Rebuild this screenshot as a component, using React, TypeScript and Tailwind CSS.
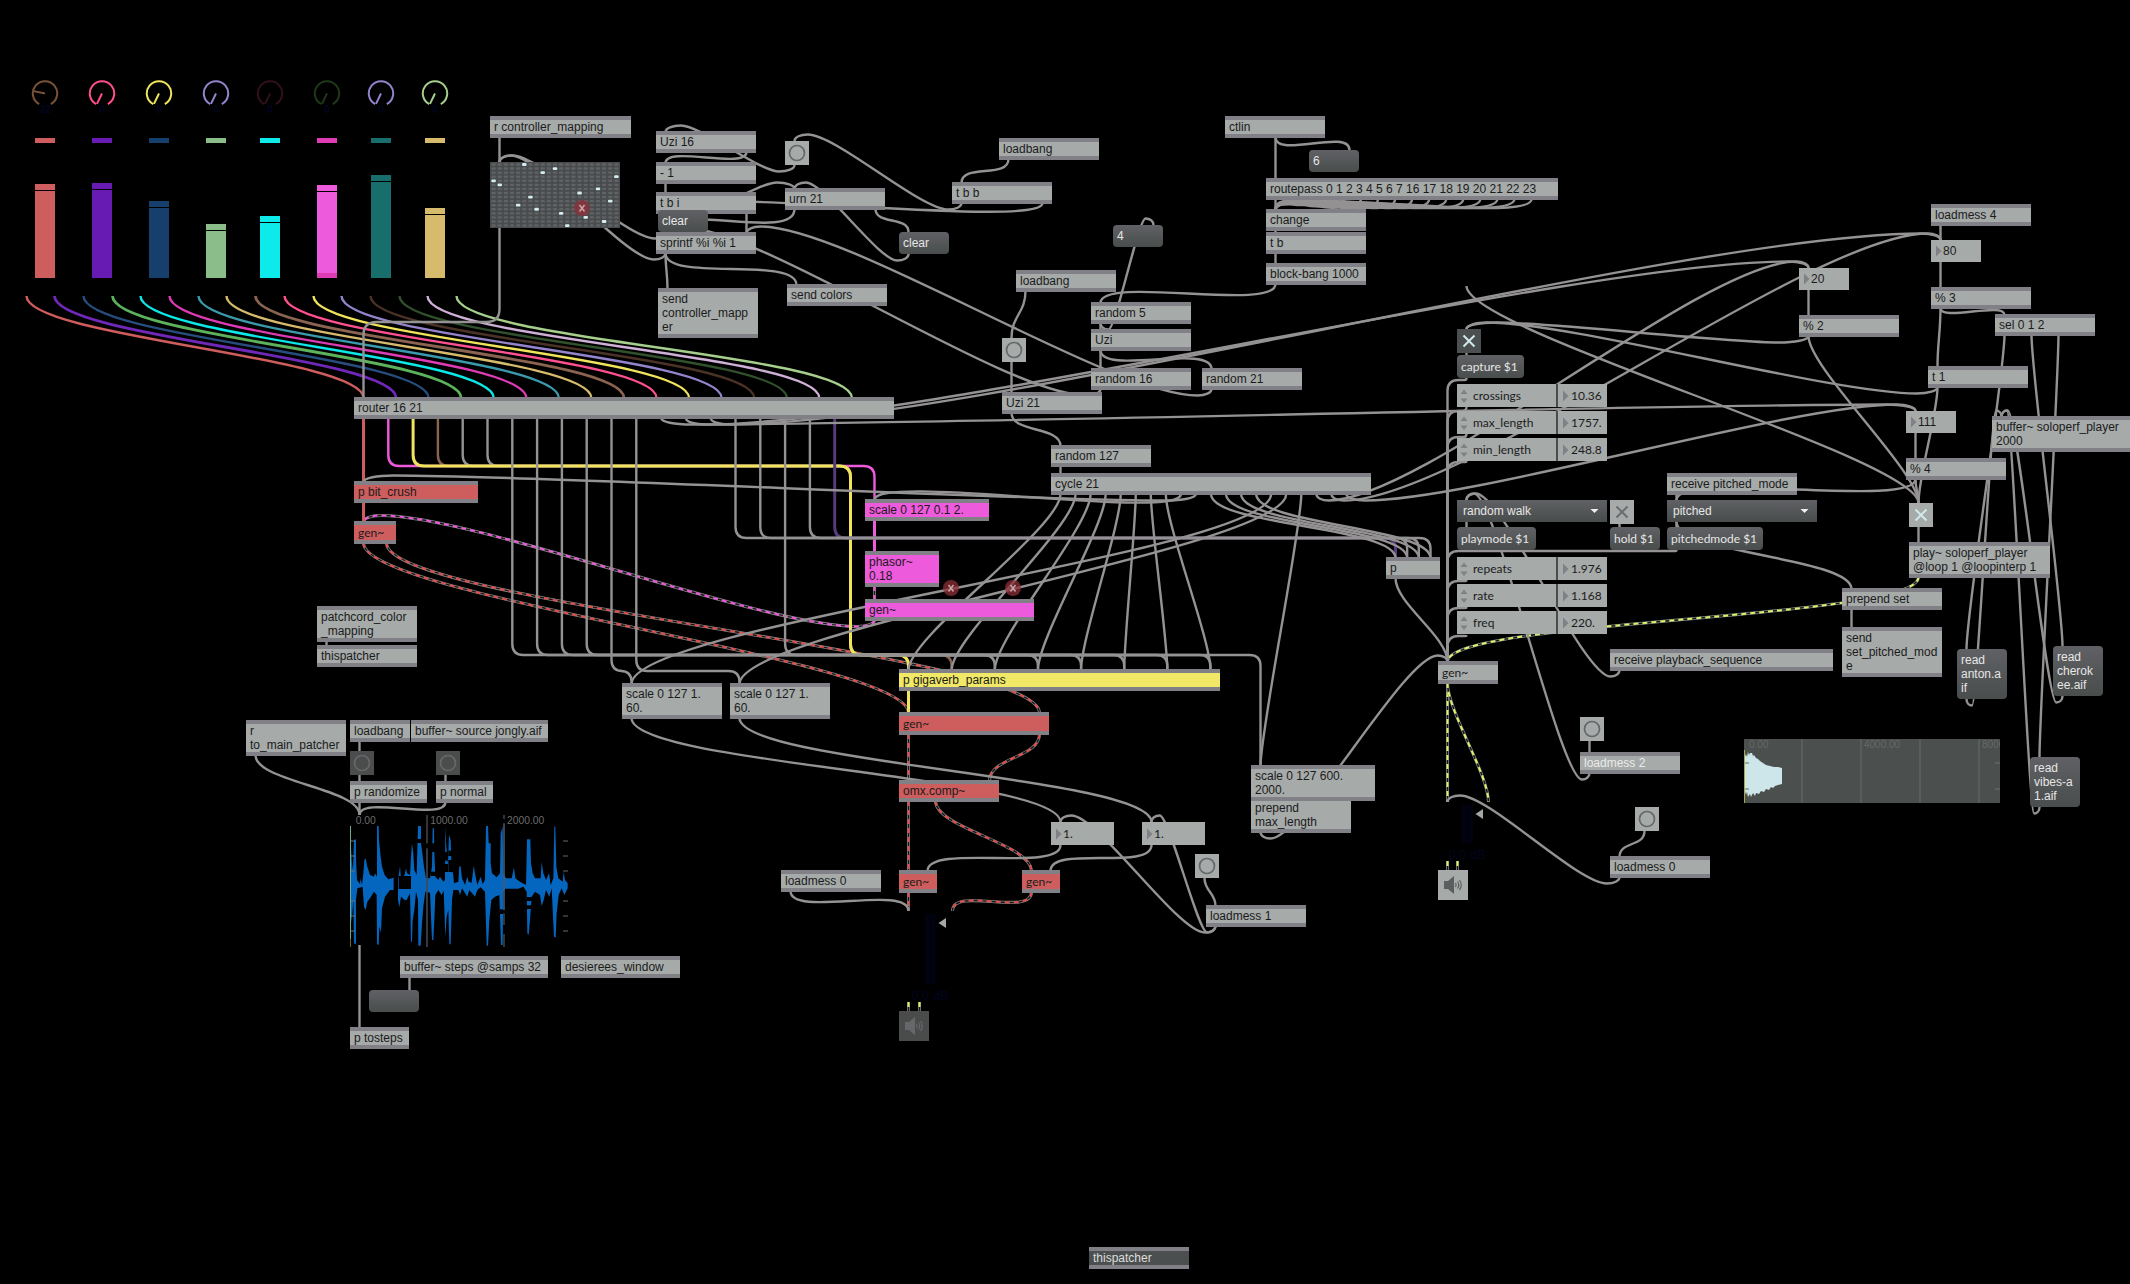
import { Fragment } from "react";

type Tone = "gray" | "red" | "pink" | "yellow" | "dark" | "ghost";

const TONES: Record<Tone, string> = {
  gray: "bg-[#a6aaa9] text-[#1b1b1b]",
  red: "bg-[#ce5d5e] text-[#1b1b1b]",
  pink: "bg-[#ed5adc] text-[#1b1b1b]",
  yellow: "bg-[#f0e866] text-[#1b1b1b]",
  dark: "bg-[#4c4f4f] text-[#dcdedd]",
  ghost: "bg-[#a6aaa9] text-[#ececec]",
};

type Box = {
  x: number;
  y: number;
  w?: number;
  t: string;
  i?: string;
  o?: string;
  tone?: Tone;
  lato?: boolean;
};

// Port strings: "c" is a patched port, "b" a patched cold inlet, "o" a free port.
const BOXES: Box[] = [
  { x: 490, y: 116, w: 141, t: "r controller_mapping", o: "c" },
  { x: 656, y: 131, t: "Uzi 16", i: "co", o: "ooc" },
  { x: 656, y: 162, t: "- 1", i: "co", o: "c" },
  { x: 656, y: 192, t: "t b i", i: "c", o: "cc" },
  { x: 656, y: 232, t: "sprintf %i %i 1", i: "cb", o: "c" },
  { x: 658, y: 288, t: "send\ncontroller_mapp\ner", i: "c" },
  { x: 785, y: 188, t: "urn 21", i: "co", o: "cc" },
  { x: 787, y: 284, t: "send colors", i: "c" },
  { x: 354, y: 397, w: 540, t: "router 16 21", i: "cccccccccccccccco", o: "ccccccccccccccccccccoo" },
  { x: 354, y: 481, w: 124, t: "p bit_crush", i: "c", o: "c", tone: "red" },
  { x: 354, y: 521, w: 42, t: "gen~", i: "c", o: "cc", tone: "red", lato: true },
  { x: 865, y: 499, w: 124, t: "scale 0 127 0.1 2.", i: "cooooo", o: "c", tone: "pink" },
  { x: 865, y: 551, w: 74, t: "phasor~\n0.18", i: "co", o: "c", tone: "pink" },
  { x: 865, y: 599, w: 169, t: "gen~", i: "c", o: "cooo", tone: "pink" },
  { x: 317, y: 606, t: "patchcord_color\n_mapping", o: "c" },
  { x: 317, y: 645, t: "thispatcher", i: "c", o: "oo" },
  { x: 246, y: 720, t: "r\nto_main_patcher", o: "c" },
  { x: 350, y: 720, w: 60, t: "loadbang", i: "o", o: "c" },
  { x: 411, y: 720, w: 137, t: "buffer~ source jongly.aif", i: "o", o: "oo" },
  { x: 350, y: 781, w: 77, t: "p randomize", i: "c", o: "c" },
  { x: 436, y: 781, w: 57, t: "p normal", i: "c", o: "c" },
  { x: 400, y: 956, w: 148, t: "buffer~ steps @samps 32", i: "o", o: "co" },
  { x: 561, y: 956, w: 119, t: "desierees_window" },
  { x: 350, y: 1027, w: 59, t: "p tosteps", i: "c" },
  { x: 622, y: 683, t: "scale 0 127 1.\n60.", i: "cooooo", o: "c" },
  { x: 730, y: 683, t: "scale 0 127 1.\n60.", i: "cooooo", o: "c" },
  { x: 999, y: 138, t: "loadbang", i: "o", o: "c" },
  { x: 952, y: 182, t: "t b b", i: "c", o: "cc" },
  { x: 1225, y: 116, t: "ctlin", i: "o", o: "oco" },
  { x: 1016, y: 270, t: "loadbang", i: "o", o: "c" },
  { x: 1091, y: 302, t: "random 5", i: "co", o: "c" },
  { x: 1091, y: 329, t: "Uzi", i: "co", o: "coo" },
  { x: 1091, y: 368, t: "random 16", i: "co", o: "c" },
  { x: 1202, y: 368, t: "random 21", i: "co", o: "c" },
  { x: 1002, y: 392, t: "Uzi 21", i: "co", o: "coo" },
  { x: 1051, y: 445, t: "random 127", i: "co", o: "c" },
  { x: 1051, y: 473, w: 320, t: "cycle 21", i: "c", o: "cccccccccccccccccccco" },
  { x: 1266, y: 178, w: 292, t: "routepass 0 1 2 3 4 5 6 7 16 17 18 19 20 21 22 23", i: "coooooooooooooooo", o: "cccccccccccccccco" },
  { x: 1266, y: 209, t: "change", i: "c", o: "coo" },
  { x: 1266, y: 232, t: "t b", i: "c", o: "c" },
  { x: 1266, y: 263, t: "block-bang 1000", i: "co", o: "co" },
  { x: 1667, y: 473, w: 130, t: "receive pitched_mode", o: "c" },
  { x: 1610, y: 649, w: 223, t: "receive playback_sequence", o: "c" },
  { x: 1438, y: 661, w: 60, t: "gen~", i: "c", o: "coooooo", lato: true },
  { x: 1931, y: 204, t: "loadmess 4", i: "o", o: "c" },
  { x: 1931, y: 287, t: "% 3", i: "co", o: "c" },
  { x: 1995, y: 314, t: "sel 0 1 2", i: "cooo", o: "ccco" },
  { x: 1799, y: 315, t: "% 2", i: "co", o: "c" },
  { x: 1928, y: 366, t: "t 1", i: "c", o: "c" },
  { x: 1906, y: 458, t: "% 4", i: "co", o: "c" },
  { x: 1992, y: 416, w: 138, t: "buffer~ soloperf_player\n2000", i: "c", o: "oo" },
  { x: 1909, y: 542, w: 141, t: "play~ soloperf_player\n@loop 1 @loopinterp 1", i: "c", o: "co" },
  { x: 1842, y: 588, t: "prepend set", i: "c", o: "c" },
  { x: 1842, y: 627, t: "send\nset_pitched_mod\ne", i: "c" },
  { x: 1386, y: 557, w: 54, t: "p", i: "cccc", o: "c" },
  { x: 899, y: 669, w: 321, t: "p gigaverb_params", i: "cccccccc", o: "c", tone: "yellow" },
  { x: 899, y: 712, w: 150, t: "gen~", i: "cc", o: "cc", tone: "red", lato: true },
  { x: 899, y: 780, t: "omx.comp~", i: "cc", o: "ccoo", tone: "red" },
  { x: 899, y: 870, w: 38, t: "gen~", i: "cc", o: "c", tone: "red", lato: true },
  { x: 1022, y: 870, w: 38, t: "gen~", i: "cc", o: "c", tone: "red", lato: true },
  { x: 781, y: 870, t: "loadmess 0", i: "o", o: "c" },
  { x: 1206, y: 905, t: "loadmess 1", i: "c", o: "c" },
  { x: 1251, y: 797, t: "prepend\nmax_length", o: "c" },
  { x: 1251, y: 765, w: 124, t: "scale 0 127 600.\n2000.", i: "cooooo", o: "c" },
  { x: 1580, y: 752, t: "loadmess 2", i: "c", o: "c", tone: "ghost" },
  { x: 1610, y: 856, t: "loadmess 0", i: "c", o: "c" },
  { x: 1089, y: 1247, t: "thispatcher", i: "o", o: "oo", tone: "dark" },
];

type Message = { x: number; y: number; w: number; t: string; lato?: boolean };

const MESSAGES: Message[] = [
  { x: 658, y: 210, w: 50, t: "clear" },
  { x: 899, y: 232, w: 50, t: "clear" },
  { x: 1113, y: 225, w: 50, t: "4" },
  { x: 1309, y: 150, w: 50, t: "6" },
  { x: 369, y: 990, w: 50, t: " " },
  { x: 1457, y: 355, w: 67, t: "capture $1", lato: true },
  { x: 1457, y: 527, w: 79, t: "playmode $1", lato: true },
  { x: 1610, y: 527, w: 50, t: "hold $1", lato: true },
  { x: 1667, y: 527, w: 96, t: "pitchedmode $1", lato: true },
  { x: 1957, y: 649, w: 50, t: "read\nanton.a\nif" },
  { x: 2053, y: 646, w: 50, t: "read\ncherok\nee.aif" },
  { x: 2030, y: 757, w: 50, t: "read\nvibes-a\n1.aif" },
];

const BANGS = [
  { x: 785, y: 141 },
  { x: 1002, y: 338 },
  { x: 1195, y: 854 },
  { x: 1580, y: 717 },
  { x: 1635, y: 807 },
  { x: 350, y: 751, dark: true },
  { x: 436, y: 751, dark: true },
];

const TOGGLES = [
  { x: 1457, y: 329, box: "bg-[#4c4f4f]", mark: "text-[#cfe8ec]", on: true, name: "capture" },
  { x: 1610, y: 500, box: "bg-[#a6aaa9]", mark: "text-[#6b6c70]", on: false, name: "hold" },
  { x: 1909, y: 503, box: "bg-[#a6aaa9]", mark: "text-[#cfe8ec]", on: true, name: "play" },
];

const NUMBERS = [
  { x: 1799, y: 268, w: 50, t: "20" },
  { x: 1931, y: 240, w: 50, t: "80" },
  { x: 1906, y: 411, w: 50, t: "111" },
  { x: 1051, y: 822, w: 63, t: "1.", lato: true },
  { x: 1142, y: 822, w: 63, t: "1.", lato: true },
];

const LENGTH_ATTRS = [
  { k: "crossings", v: "10.36" },
  { k: "max_length", v: "1757." },
  { k: "min_length", v: "248.8" },
];

const PLAY_ATTRS = [
  { k: "repeats", v: "1.976" },
  { k: "rate", v: "1.168" },
  { k: "freq", v: "220." },
];

const CHANNELS = [
  { gap: "mr-[37px]", dial: "#7a5238", bar: "#ce5d5e", led: "#ce5d5e", top: 184, n: 32 },
  { gap: "mr-[37px]", dial: "#ff4f8d", bar: "#671bb2", led: "#671bb2", top: 183, n: 0 },
  { gap: "mr-[37px]", dial: "#f0e45c", bar: "#163f6c", led: "#163f6c", top: 201, n: 0 },
  { gap: "mr-[34px]", dial: "#9484cc", bar: "#8abd8a", led: "#8abd8a", top: 224, n: 0 },
  { gap: "mr-[37px]", dial: "#32101a", bar: "#0ceaea", led: "#0ceaea", top: 216, n: 0 },
  { gap: "mr-[34px]", dial: "#20381a", bar: "#ed5adc", led: "#de3bb5", top: 185, n: 0 },
  { gap: "mr-[34px]", dial: "#9484cc", bar: "#186e6a", led: "#186e6a", top: 175, n: 0 },
  { gap: "", dial: "#a6cf8c", bar: "#d6bb6c", led: "#d6bb6c", top: 208, n: 0 },
];

const GRAY = "#949292";

// Cords that run down are one S-curve; cords that run up get a small round
// hook at both ends, joined by a nearly straight diagonal.
function curve(x0: number, y0: number, x1: number, y1: number, bend?: number) {
  const dx = x1 - x0;
  const dy = y1 - y0;
  if (dy <= 0) {
    const s = Math.sign(dx) || 1;
    const hx = Math.min(3.5 + 6 * Math.sqrt(Math.abs(dx) / Math.max(-dy, 1)), 30, Math.abs(dx) * 0.35);
    const hy = 6.5;
    const bx = x0 + s * hx;
    const tx = x1 - s * hx;
    const h = 0.2 * (tx - bx);
    return (
      `M${x0} ${y0}C${x0} ${y0 + hy * 0.6} ${x0 + s * hx * 0.45} ${y0 + hy} ${bx} ${y0 + hy}` +
      `C${bx + h} ${y0 + hy} ${tx - h} ${y1 - hy} ${tx} ${y1 - hy}` +
      `C${x1 - s * hx * 0.45} ${y1 - hy} ${x1} ${y1 - hy * 0.6} ${x1} ${y1}`
    );
  }
  const dist = Math.hypot(dx, dy);
  let d = Math.min(20 + 0.06 * dist, 26 + 0.2 * dy);
  if (dist < 50) d = Math.min(d, dist * 0.45);
  if (bend !== undefined) d = bend;
  return `M${x0} ${y0}C${x0} ${y0 + d} ${x1} ${y1 - d} ${x1} ${y1}`;
}

// Right-angled cord with rounded corners through the given points.
function route(points: number[][], r = 11) {
  let path = `M${points[0][0]} ${points[0][1]}`;
  for (let k = 1; k < points.length - 1; k++) {
    const [ax, ay] = points[k - 1];
    const [bx, by] = points[k];
    const [cx, cy] = points[k + 1];
    const inLen = Math.hypot(bx - ax, by - ay);
    const outLen = Math.hypot(cx - bx, cy - by);
    const q = Math.min(r, inLen, outLen);
    path += `L${bx - ((bx - ax) / inLen) * q} ${by - ((by - ay) / inLen) * q}`;
    path += `Q${bx} ${by} ${bx + ((cx - bx) / outLen) * q} ${by + ((cy - by) / outLen) * q}`;
  }
  const end = points[points.length - 1];
  return path + `L${end[0]} ${end[1]}`;
}

const rOut = (k: number) => 363.5 + 24.8 * k;
const rIn = (k: number) => 363.5 + 32.56 * k;
const cOut = (k: number) => 1060.5 + 15.05 * k;
const gIn = (k: number) => 908.5 + 43.14 * k;
const pIn = (k: number) => 1395.5 + 11.67 * k;

const CURVES: number[][] = [
  [499.5, 137, 499.5, 163],
  [665.5, 253, 499.5, 162],
  [667.5, 232, 499.5, 162],
  [794.5, 165, 665.5, 132],
  [746.5, 152, 665.5, 163, 18],
  [665.5, 183, 665.5, 193],
  [746.5, 213, 746.5, 233],
  [665.5, 213, 794.5, 189],
  [961.5, 203, 794.5, 141],
  [1042.5, 203, 667.5, 210],
  [908.5, 254, 794.5, 189],
  [794.5, 209, 665.5, 233, 34],
  [875.5, 209, 908.5, 232, 16],
  [1100.5, 389, 665.5, 233],
  [1211.5, 389, 746.5, 233],
  [665.5, 253, 667.5, 289],
  [665.5, 253, 796.5, 285, 30],
  [1008.5, 159, 961.5, 183, 20],
  [1025.5, 291, 1011.5, 338],
  [1011.5, 362, 1011.5, 393],
  [1100.5, 323, 1153.5, 225],
  [1275.5, 284, 1100.5, 303, 28],
  [1100.5, 323, 1100.5, 330],
  [1100.5, 350, 1100.5, 369],
  [1100.5, 350, 1211.5, 369, 26],
  [1011.5, 413, 1060.5, 446, 20],
  [1060.5, 466, 1060.5, 474],
  [1275.5, 137, 1275.5, 179],
  [1275.5, 137, 1349.5, 150, 22],
  [1275.5, 230, 1275.5, 233],
  [1275.5, 253, 1275.5, 264],
  [1466.5, 286, 1918.5, 503, 45],
  [1808.5, 336, 1466.5, 329],
  [1937.5, 387, 1466.5, 329],
  [1808.5, 336, 1918.5, 503],
  [1937.5, 387, 1918.5, 503],
  [1915.5, 479, 1918.5, 503],
  [1915.5, 479, 1676.5, 500],
  [1918.5, 527, 1918.5, 543],
  [1676.5, 494, 1676.5, 500],
  [1676.5, 522, 1676.5, 527],
  [1466.5, 522, 1466.5, 527],
  [1619.5, 524, 1619.5, 527],
  [1466.5, 353, 1466.5, 355],
  [1676.5, 522, 1851.5, 589],
  [1851.5, 609, 1851.5, 628],
  [1619.5, 670, 1466.5, 500],
  [1589.5, 773, 1466.5, 500],
  [1395.5, 578, 1447.5, 662],
  [1260.5, 832, 1447.5, 662],
  [1619.5, 877, 1447.5, 802],
  [1644.5, 831, 1619.5, 857],
  [1589.5, 741, 1589.5, 753],
  [1940.5, 225, 1940.5, 240],
  [1940.5, 262, 1940.5, 288],
  [1940.5, 308, 2004.5, 315, 14],
  [1940.5, 308, 1937.5, 367],
  [1808.5, 290, 1808.5, 316],
  [1915.5, 433, 1915.5, 459],
  [2004.5, 335, 1966.5, 649],
  [2031.5, 335, 2062.5, 646],
  [2058.5, 335, 2039.5, 757],
  [1966.5, 699, 2001.5, 417],
  [2062.5, 696, 2001.5, 417],
  [2039.5, 807, 2001.5, 417],
  [255.5, 755, 359.5, 815],
  [359.5, 802, 359.5, 815],
  [445.5, 802, 359.5, 815, 20],
  [359.5, 945, 359.5, 1028],
  [359.5, 741, 359.5, 751],
  [359.5, 775, 359.5, 782],
  [445.5, 775, 445.5, 782],
  [409.5, 977, 409.5, 990],
  [326.5, 641, 326.5, 646],
  [631.5, 718, 1060.5, 822],
  [739.5, 718, 1151.5, 822],
  [1060.5, 845, 927.5, 871],
  [1151.5, 845, 1050.5, 871],
  [1215.5, 926, 1060.5, 822],
  [1215.5, 926, 1151.5, 822],
  [1204.5, 878, 1215.5, 906],
  [790.5, 891, 908.5, 911],
  [rOut(12), 418, 1915.5, 411],
  [rOut(13), 418, 1808.5, 268],
  [rOut(14), 418, 1940.5, 240],
  ...[0, 1, 2, 3, 4, 5, 6, 7].map((k) => [cOut(k), 494, gIn(k), 670]),
  [cOut(8), 494, 874.5, 500],
  [cOut(9), 494, 363.5, 482],
  ...[0, 1, 2, 3].map((k) => [cOut(10 + k), 494, pIn(k), 558]),
  [cOut(14), 494, 631.5, 684],
  [cOut(15), 494, 739.5, 684],
  [cOut(16), 494, 1260.5, 766],
  [cOut(17), 494, 1808.5, 268],
  [cOut(18), 494, 1940.5, 240],
  [cOut(19), 494, 1915.5, 411],
  ...Array.from({ length: 16 }, (_, k) => [1275.5 + 17.07 * k, 199, 1275.5, 210, Math.min(26, 5 + 5 * k)]),
];

const ATTR_LINES = [
  [378, 380],
  [407, 411],
  [434, 437],
  [461, 462],
  [580, 581],
  [607, 608],
  [635, 636],
];

const ROUTES: { d: string; c: string; w?: number }[] = [
  { d: route([[499.5, 228], [499.5, 322], [363.5, 322], [363.5, 398]], 13), c: GRAY },
  { d: `M${rOut(0)} 418V482`, c: "#ce5d5e", w: 3 },
  { d: "M363.5 502V522", c: "#ce5d5e", w: 3 },
  { d: route([[rOut(1), 418], [rOut(1), 466], [874.5, 466], [874.5, 500]]), c: "#ed5adc" },
  { d: "M874.5 520V552", c: "#ed5adc", w: 3 },
  ...[4, 5].map((k) => ({
    d: route([[rOut(k), 418], [rOut(k), 466], [850.5, 466], [850.5, 655], [gIn(k - 2), 655], [gIn(k - 2), 670]]),
    c: GRAY,
  })),
  { d: route([[rOut(3), 418], [rOut(3), 466], [850.5, 466], [850.5, 655], [gIn(1), 655], [gIn(1), 670]]), c: "#8a6450" },
  { d: route([[rOut(2), 418], [rOut(2), 466], [850.5, 466], [850.5, 655], [gIn(0), 655], [gIn(0), 670]]), c: "#f0e45c", w: 3 },
  ...[6, 7, 8, 9].map((k) => ({
    d: route([[rOut(k), 418], [rOut(k), 655], [gIn(k - 2), 655], [gIn(k - 2), 670]]),
    c: GRAY,
  })),
  { d: route([[rOut(17), 418], [rOut(17), 655], [1260.5, 655], [1260.5, 766]]), c: GRAY },
  { d: route([[rOut(10), 418], [rOut(10), 671], [631.5, 671], [631.5, 684]]), c: GRAY },
  { d: route([[rOut(11), 418], [rOut(11), 671], [739.5, 671], [739.5, 684]]), c: GRAY },
  { d: route([[rOut(19), 418], [rOut(19), 538], [pIn(0), 538], [pIn(0), 558]]), c: "#553a7c", w: 3 },
  { d: route([[rOut(18), 418], [rOut(18), 538], [pIn(1), 538], [pIn(1), 558]]), c: GRAY },
  { d: route([[rOut(16), 418], [rOut(16), 538], [pIn(2), 538], [pIn(2), 558]]), c: GRAY },
  { d: route([[rOut(15), 418], [rOut(15), 538], [pIn(3), 538], [pIn(3), 558]]), c: GRAY },
  ...ATTR_LINES.map(([a, b]) => ({
    d: route([[1466.5, a], [1466.5, b], [1447.5, b], [1447.5, 662]]),
    c: GRAY,
  })),
  { d: route([[1676.5, 550], [1676.5, 551], [1447.5, 551], [1447.5, 662]]), c: GRAY },
  { d: "M908.5 690V713", c: "#f0e45c", w: 3 },
];

const RAINBOW = [
  [26.5, "#ce5d5e"], [54.5, "#6f28b8"], [83.5, "#264d7d"], [112.5, "#5cb35c"],
  [140.5, "#0ce8e8"], [169.5, "#de3bb5"], [198.5, "#3a9aac"], [226.5, "#d6bb6c"],
  [255.5, "#8a6450"], [284.5, "#ff5090"], [313.5, "#f0e45c"], [341.5, "#9484cc"],
  [370.5, "#4a3326"], [399.5, "#31502c"], [427.5, "#cfb0d6"], [456.5, "#a6cf8c"],
] as [number, string][];

const SIGNALS: [string, string][] = [
  [curve(363.5, 543, 908.5, 713), "#e0504f"],
  [curve(386.5, 543, 1039.5, 713), "#e0504f"],
  [curve(874.5, 620, 363.5, 522), "#ed5adc"],
  ["M874.5 586V600", "#ed5adc"],
  ["M908.5 734V781", "#e0504f"],
  [curve(1039.5, 734, 989.5, 781), "#e0504f"],
  ["M908.5 801V871", "#e0504f"],
  [curve(935.5, 801, 1031.5, 871), "#e0504f"],
  ["M908.5 892V911", "#e0504f"],
  [curve(1031.5, 892, 952.5, 911), "#e0504f"],
  [curve(1918.5, 577, 1447.5, 662), "#d6f56c"],
  ["M1447.5 683V802", "#d6f56c"],
  [curve(1447.5, 683, 1488.5, 802), "#d6f56c"],
  ["M908.5 1002V1011", "#d6f56c"],
  ["M919.5 1002V1011", "#d6f56c"],
  ["M1447.5 861V870", "#d6f56c"],
  ["M1457.5 861V870", "#d6f56c"],
];

function Cords() {
  return (
    <svg className="absolute inset-0 h-full w-full" fill="none" aria-hidden="true">
      {RAINBOW.map(([x, c], k) => (
        <path key={k} d={curve(x, 296, rIn(k), 398)} stroke={c} strokeWidth={k === 1 || k === 3 || k === 8 ? 2.8 : 2.4} />
      ))}
      {SIGNALS.map(([d, c], k) => (
        <Fragment key={k}>
          <path d={d} stroke="#858383" strokeWidth={3} />
          <path d={d} stroke="#161616" strokeWidth={1.4} />
          <path d={d} stroke={c} strokeWidth={2} strokeDasharray="5 4" />
        </Fragment>
      ))}
      {ROUTES.map((r, k) => (
        <path key={k} d={r.d} stroke={r.c} strokeWidth={r.w ?? 2.4} />
      ))}
      {CURVES.map((c, k) => (
        <path key={k} d={curve(c[0], c[1], c[2], c[3], c[4])} stroke={GRAY} strokeWidth={2.4} />
      ))}
    </svg>
  );
}

function Ports({ kinds, w, edge, top }: { kinds: string; w: number; edge: number; top: boolean }) {
  const n = kinds.length;
  const s = top ? 1 : -1;
  return (
    <>
      {kinds.split("").map((k, i) => {
        const x = n === 1 ? 9.5 : 9.5 + ((w - 19) * i) / (n - 1);
        if (k === "o") {
          return (
            <path key={i} d={`M${x - 3.3} ${edge}A3.3 3.3 0 0 ${top ? 0 : 1} ${x + 3.3} ${edge}Z`} fill="#c6c6ca" />
          );
        }
        const c = top ? (k === "b" ? "#7cc4dc" : "#eda294") : "#c6d64e";
        return (
          <g key={i}>
            <circle cx={x} cy={edge + s} r={1.9} fill="#474b4b" />
            <path d={`M${x - 2.9} ${edge + s * 0.6}A2.9 2.9 0 0 ${top ? 0 : 1} ${x + 2.9} ${edge + s * 0.6}`} fill="none" stroke={c} strokeWidth={1} />
          </g>
        );
      })}
    </>
  );
}

function ObjectBox({ b }: { b: Box }) {
  const w = b.w ?? 100;
  const lines = b.t.split("\n").length;
  const h = 8 + (b.lato ? 15 : 14) * lines;
  return (
    <div
      className={`absolute overflow-hidden border-y-4 border-[#808086] pl-1 whitespace-pre ${TONES[b.tone ?? "gray"]} ${b.lato ? "font-[Lato] leading-[15px]" : "leading-[14px]"}`}
      style={{ left: b.x, top: b.y, width: w }}
    >
      {b.t}
      <svg className="absolute -top-1 left-0" width={w} height={h} aria-hidden="true">
        <Ports kinds={b.i ?? ""} w={w} edge={0} top />
        <Ports kinds={b.o ?? ""} w={w} edge={h} top={false} />
      </svg>
    </div>
  );
}

function MessageBox({ m }: { m: Message }) {
  return (
    <button
      type="button"
      aria-label={m.t.trim() ? undefined : "empty message"}
      className={`absolute rounded bg-linear-to-b from-[#606165] to-[#494d4c] py-1 pl-1 text-left whitespace-pre text-[#e6e6e6] ${m.lato ? "font-[Lato] leading-[15px]" : "leading-[14px]"}`}
      style={{ left: m.x, top: m.y, width: m.w }}
    >
      {m.t}
    </button>
  );
}

function Bang({ x, y, dark }: { x: number; y: number; dark?: boolean }) {
  return (
    <button
      type="button"
      aria-label="bang"
      className={`absolute grid size-6 place-items-center ${dark ? "bg-[#4a4d4c] text-[#66676b]" : "bg-[#a6aaa9] text-[#66676b]"}`}
      style={{ left: x, top: y }}
    >
      <svg className="size-6" viewBox="0 0 24 24" fill="none" stroke="currentColor" strokeWidth={1.7}>
        <circle cx={12} cy={12} r={7.5} />
      </svg>
    </button>
  );
}

function Toggle({ t }: { t: (typeof TOGGLES)[number] }) {
  return (
    <label className={`absolute grid size-6 place-items-center ${t.box} ${t.mark}`} style={{ left: t.x, top: t.y }}>
      <input type="checkbox" aria-label={t.name} defaultChecked={t.on} className="absolute inset-0 opacity-0" />
      <svg className="size-6" viewBox="0 0 24 24" stroke="currentColor" strokeWidth={2}>
        <path d="M6.5 6.5L17.500 17.500M17.500 6.500L6.500 17.500" />
      </svg>
    </label>
  );
}

function Wedge() {
  return (
    <svg className="h-3 w-2 shrink-0" viewBox="0 0 8 12" aria-hidden="true">
      <path d="M1 0.500L6.500 6L1 11.500Z" fill="#808086" />
    </svg>
  );
}

function NumberBox({ n }: { n: (typeof NUMBERS)[number] }) {
  return (
    <label
      className={`absolute flex items-center bg-[#a6aaa9] py-1 pl-1 text-[#1b1b1b] ${n.lato ? "font-[Lato] leading-[15px]" : "leading-[14px]"}`}
      style={{ left: n.x, top: n.y, width: n.w }}
    >
      <Wedge />
      <input aria-label="number" defaultValue={n.t} className={`w-full min-w-0 bg-transparent outline-none ${n.lato ? "h-[15px]" : "h-[14px]"}`} />
    </label>
  );
}

function AttrList({ attrs }: { attrs: { k: string; v: string }[] }) {
  return (
    <div className="flex flex-col gap-1 font-[Lato] text-[#1b1b1b]">
      {attrs.map((a) => (
        <label key={a.k} className="flex h-[23px] items-stretch bg-[#4a4d4c]">
          <span className="flex w-[99px] items-center gap-1 bg-[#a6aaa9] pl-[3px]">
            <svg className="h-4 w-[9px]" viewBox="0 0 9 16" fill="#808086" aria-hidden="true">
              <path d="M0.500 6L4 1.500L7.500 6ZM0.500 10.500H7.500L4 15Z" />
            </svg>
            {a.k}
          </span>
          <span className="ml-0.5 flex flex-1 items-center bg-[#a6aaa9] pl-1">
            <Wedge />
            <input defaultValue={a.v} className="ml-px h-4 w-full min-w-0 bg-transparent outline-none" />
          </span>
        </label>
      ))}
    </div>
  );
}

function Menu({ x, t }: { x: number; t: string }) {
  return (
    <div className="absolute top-[500px] w-[150px] bg-linear-to-b from-[#606165] to-[#484c4b]" style={{ left: x }}>
      <select aria-label={t} className="block h-[22px] w-full appearance-none pl-1.5 text-[#e6e6e6] outline-none">
        <option>{t}</option>
      </select>
      <svg className="pointer-events-none absolute top-2 right-1.5 h-2 w-3" viewBox="0 0 12 8" aria-hidden="true">
        <path d="M1.500 1H9.500L5.500 5Z" fill="#f0f0f0" />
      </svg>
    </div>
  );
}

function Channel({ c }: { c: (typeof CHANNELS)[number] }) {
  const angle = c.n ? -168 : 116;
  const rad = (angle * Math.PI) / 180;
  return (
    <div className={`flex w-5 flex-col items-center ${c.gap}`}>
      <label className="relative flex flex-col items-center">
        <svg className="-mx-2 h-[26px] w-7 shrink-0" viewBox="-14 -13.500 28 26" fill="none" stroke={c.dial} strokeWidth={2}>
          <path d="M-5.800 10.700A12.200 12.200 0 1 1 5.800 10.700" />
          <path d={`M0 0L${11.5 * Math.cos(rad)} ${11.5 * Math.sin(rad)}`} />
        </svg>
        <span className="text-[10px] leading-2 font-bold text-[#020520]">{c.n}</span>
        <input type="range" max={127} defaultValue={c.n} aria-label="dial" className="absolute inset-0 w-5 opacity-0" />
      </label>
      <span className="mt-6 h-[5px] w-5" style={{ backgroundColor: c.led }} />
      <label className="relative flex h-[135px] w-5 flex-col justify-end">
        <span className="h-1.5 w-5" style={{ backgroundColor: c.bar }} />
        <span
          className={`mt-px w-5 ${c.led === c.bar ? "" : "border-b-[5px] border-[#de3bb5]"}`}
          style={{ height: 271 - c.top, backgroundColor: c.bar }}
        />
        <input type="range" max={127} aria-label="level" className="absolute inset-0 w-5 opacity-0" />
      </label>
    </div>
  );
}

const LIT = [
  [5, 0], [10, 1], [8, 2], [20, 3], [0, 4], [1, 5], [17, 6], [14, 7],
  [6, 8], [19, 9], [4, 10], [7, 11], [11, 12], [15, 13], [18, 14], [12, 15],
];

function Matrix() {
  return (
    <svg className="absolute top-[162px] left-[490px] h-[66px] w-[130px] bg-[#494c4c]" viewBox="0 0 130 66" role="img" aria-label="matrix">
      {Array.from({ length: 21 * 16 }, (_, k) => {
        const col = k % 21;
        const row = Math.floor(k / 21);
        const lit = LIT.some(([a, b]) => a === col && b === row);
        return (
          <rect
            key={k}
            x={3.6 + col * 6.14 - (lit ? 2.3 : 2.2)}
            y={2.5 + row * 4.07 - (lit ? 1.4 : 1.2)}
            width={lit ? 4.6 : 4.4}
            height={lit ? 2.8 : 2.4}
            rx={1.2}
            fill={lit ? "#d5edf1" : "#606266"}
          />
        );
      })}
    </svg>
  );
}

const UPPER_A = "363,800 366,850 369,870 372,780 378,778 378,830 381,900 390,912 392,895 396,915 400,880 403,840 407,835 412,860 420,885 432,890 435,880 441,890 441,738 446,738 447,780 452,830 456,860 464,885 475,898 491,893";
const LOWER_A = "491,930 480,930 465,950 456,985 453,1058 448,1040 446,1095 441,1093 440,945 432,935 420,955 412,965 407,990 402,980 398,920 382,925 378,960 378,1093 372,1090 370,960 367,1000 363,1030";
const UPPER_B = "504,902 507,880 510,858 513,898 524,884 528,865 531,880 540,885 543,830 546,790 550,820 553,870 560,885 564,738 573,738 573,790 577,820 582,860 588,895 600,895 606,860 608,745 612,745 613,820 616,890 625,900 630,890 640,905 645,900 646,740 649,800 654,850 657,765 662,780 665,875 669,878 672,910 685,905 688,858 692,860 696,895 705,915 712,890 716,905 725,908 731,857 735,880 742,915 752,890 758,912 765,900 768,738 774,738 776,790 782,790 782,850 786,880 800,892 810,880 812,760 818,740 820,880 828,895 845,895 852,862 856,895 870,905 888,915 891,778 901,778 903,850 908,880 915,895 932,895 935,845 940,880 948,900 957,880 962,915 970,895 973,738 976,740 979,860 985,895 998,905 1001,875 1005,900 1013,910";
const LOWER_B = "1013,925 1003,945 995,925 986,945 980,1000 977,1073 972,1070 965,925 958,950 948,930 941,960 935,978 930,945 915,935 905,950 900,1020 896,1065 892,1060 890,935 880,920 865,926 826,926 820,935 818,1095 813,1095 808,945 795,950 784,960 778,1020 774,1097 770,1097 765,935 752,922 742,930 735,950 718,930 712,950 696,925 690,945 685,930 670,930 666,960 662,1093 658,1093 655,990 650,1010 646,1070 641,932 635,945 625,930 616,945 613,1020 610,1080 606,1080 600,938 586,935 580,980 576,1030 572,1097 565,1097 564,960 558,935 553,990 548,1020 546,1085 543,1085 540,940 530,960 524,960 513,950 508,982 504,960";
const GAPS = [
  [506, 888, 37, 39], [560, 777, 20, 12], [602, 790, 14, 26], [602, 875, 16, 13],
  [642, 816, 12, 26], [642, 852, 12, 24], [655, 812, 13, 16], [655, 840, 13, 36],
  [890, 951, 18, 12], [890, 976, 18, 11], [810, 988, 9, 14], [494, 870, 10, 110],
];

function SourceWave() {
  return (
    <svg className="absolute top-[815px] left-[350px] h-[132px] w-[220px]" viewBox="360 705 660 396" role="img" aria-label="source waveform">
      <polygon points={`${UPPER_A} ${LOWER_A}`} fill="#0566bf" />
      <polygon points={`${UPPER_B} ${LOWER_B}`} fill="#0566bf" />
      {GAPS.map(([x, y, w, h], k) => (
        <rect key={k} x={x} y={y} width={w} height={h} fill="#000" />
      ))}
      {[783, 828, 873, 963, 1008, 1053].map((y) => (
        <Fragment key={y}>
          <rect x={363} y={y - 3} width={12} height={6} fill="#6b6f75" opacity={0.5} />
          <rect x={999} y={y - 3} width={15} height={6} fill="#333" />
        </Fragment>
      ))}
      <rect x={588} y={705} width={6} height={85} fill="#343434" />
      <rect x={588} y={805} width={6} height={296} fill="#42474f" opacity={0.8} />
      <rect x={819} y={705} width={6} height={12} fill="#343434" />
      <rect x={819} y={730} width={6} height={260} fill="#4a5868" opacity={0.8} />
      <rect x={819} y={1000} width={6} height={35} fill="#343434" />
      <rect x={819} y={1062} width={6} height={39} fill="#343434" />
      <rect x={360} y={738} width={3} height={340} fill="#6fa98a" />
      <rect x={360} y={1078} width={3} height={23} fill="#6d6a22" />
      <g fontSize={31} fill="#6b6b6b">
        <text x={377} y={732}>0.00</text>
        <text x={601} y={732}>1000.00</text>
        <text x={831} y={732}>2000.00</text>
      </g>
    </svg>
  );
}

function PlayerWave() {
  return (
    <svg className="absolute top-[739px] left-[1744px] h-16 w-64 bg-[#4b4f4e]" viewBox="0 0 256 64" role="img" aria-label="player waveform">
      {[58, 117, 176, 235].map((x) => (
        <rect key={x} x={x - 1} y={0} width={2} height={64} fill="#5a5d5e" />
      ))}
      <path
        d="M0 20L2 15L3 18L4 13L5 16L6 14L8 14L9 17L10 16L12 19L14 20L16 22L19 24L22 26L26 27L30 28L34 28L38 29V45L34 46L31 47L29 49L27 48L25 51L22 50L20 53L17 52L15 55L12 54L11 57L9 54L7 58L6 55L4 58L3 53L2 56L0 48Z"
        fill="#cde6e9"
      />
      <rect x={0} y={11} width={1} height={53} fill="#a9a94a" />
      {[24, 50].map((y) => (
        <Fragment key={y}>
          <rect x={1} y={y - 1} width={4} height={2} fill="#9aa9ab" />
          <rect x={251} y={y - 1} width={5} height={2} fill="#5d6061" />
        </Fragment>
      ))}
      <g fontSize={10} fill="#66696a">
        <text x={5} y={9}>0.00</text>
        <text x={120} y={9}>4000.00</text>
        <text x={238} y={9}>8000.00</text>
      </g>
    </svg>
  );
}

function Speaker({ x, y, dark }: { x: number; y: number; dark?: boolean }) {
  return (
    <button
      type="button"
      aria-label="audio output"
      className={`absolute grid size-[30px] place-items-center ${dark ? "bg-[#494c4b] text-[#66676b]" : "bg-[#a6aaa9] text-[#5c5d61]"}`}
      style={{ left: x, top: y }}
    >
      <svg className="size-[30px]" viewBox="0 0 30 30" fill="none" stroke="currentColor" strokeWidth={1.2}>
        <path d="M6 11H10L16 6V24L10 19H6Z" fill="currentColor" stroke="none" />
        <path d="M17.500 13Q18.800 15 17.500 17M19.500 11.500Q22 15 19.500 18.500M21.500 10Q25 15 21.500 20" />
      </svg>
    </button>
  );
}

function Gain({ x, y, bar }: { x: number; y: number; bar: number }) {
  return (
    <div className="absolute flex w-12 flex-col items-center text-[13px] leading-4 text-[#020520]" style={{ left: x, top: y }}>
      <div className="relative flex gap-px">
        <span className="w-[5px] bg-[#00030f]" style={{ height: bar }} />
        <span className="w-[5px] bg-[#00030f]" style={{ height: bar }} />
        <svg className="absolute top-1 left-full ml-0.5 h-[10px] w-2" viewBox="0 0 8 10" aria-hidden="true">
          <path d="M8 0V10L0.500 5Z" fill="#a3a7a6" />
        </svg>
      </div>
      <span className="mt-1">0.0 dB</span>
      <input type="range" aria-label="gain" className="absolute inset-0 w-12 opacity-0" />
    </div>
  );
}

function MutedMark({ x, y }: { x: number; y: number }) {
  return (
    <svg className="absolute size-4" style={{ left: x, top: y }} viewBox="0 0 16 16" aria-hidden="true">
      <circle cx={8} cy={8} r={8} fill="#8f2f38" opacity={0.75} />
      <path d="M5.500 5L10.500 11.500M10.500 5L5.500 11.500" stroke="#c9a5a7" strokeWidth={1.5} />
    </svg>
  );
}

export default function App() {
  return (
    <main className="relative min-h-screen w-full overflow-hidden bg-black font-['Liberation_Sans',Arial,sans-serif] text-xs">
      <Cords />
      <section aria-label="controller" className="relative flex pt-20 pl-[35px]">
        {CHANNELS.map((c, k) => (
          <Channel key={k} c={c} />
        ))}
      </section>
      <Matrix />
      {BOXES.map((b, k) => (
        <ObjectBox key={k} b={b} />
      ))}
      {MESSAGES.map((m, k) => (
        <MessageBox key={k} m={m} />
      ))}
      {BANGS.map((b, k) => (
        <Bang key={k} {...b} />
      ))}
      {TOGGLES.map((t) => (
        <Toggle key={t.name} t={t} />
      ))}
      {NUMBERS.map((n, k) => (
        <NumberBox key={k} n={n} />
      ))}
      <section aria-label="player parameters" className="absolute top-[384px] left-[1457px] flex w-[150px] flex-col gap-24">
        <AttrList attrs={LENGTH_ATTRS} />
        <AttrList attrs={PLAY_ATTRS} />
      </section>
      <Menu x={1457} t="random walk" />
      <Menu x={1667} t="pitched" />
      <SourceWave />
      <PlayerWave />
      <Gain x={906} y={914} bar={70} />
      <Gain x={1443} y={805} bar={38} />
      <Speaker x={899} y={1011} dark />
      <Speaker x={1438} y={870} />
      <MutedMark x={574} y={200} />
      <MutedMark x={943} y={580} />
      <MutedMark x={1005} y={580} />
    </main>
  );
}
